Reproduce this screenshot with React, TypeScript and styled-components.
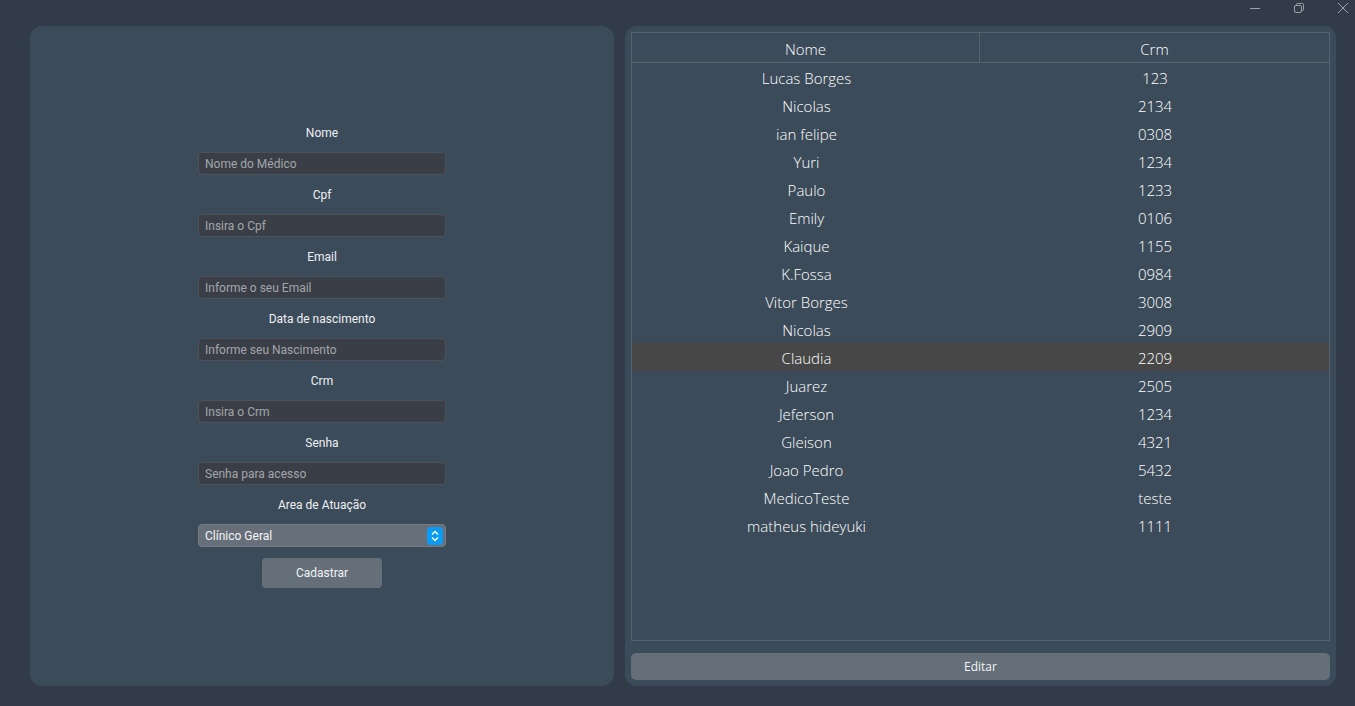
import React from "react";
import styled, { createGlobalStyle } from "styled-components";

const Global = createGlobalStyle`
  html, body { margin: 0; padding: 0; background: #323c48; }
  body { width: 1355px; height: 706px; overflow: hidden; font-family: Roboto, "Noto Sans", sans-serif; }
  * { box-sizing: border-box; }
`;

const Window = styled.div`
  width: 1355px;
  height: 706px;
  background: #323c48;
  position: relative;
  display: grid;
  grid-template-columns: 584px 711px;
  column-gap: 11px;
  padding: 26px 19px 20px 30px;
`;

const Controls = styled.div`
  position: absolute;
  top: 0;
  right: -10px;
  display: flex;
  align-items: center;
  height: 15px;
`;

const CtrlBtn = styled.div`
  width: 44px;
  height: 15px;
  display: flex;
  align-items: center;
  justify-content: center;
`;

const Panel = styled.div`
  background: #3c4b5a;
  border-radius: 12px;
`;

const FormPanel = styled(Panel)`
  display: flex;
  flex-direction: column;
  align-items: center;
  justify-content: center;
  gap: 8px;
  padding-bottom: 3px;
`;

const Label = styled.div`
  height: 23px;
  line-height: 23px;
  font-size: 12px;
  font-weight: 400;
  color: #eef0f2;
  text-align: center;
  padding-top: 1px;
`;

const Input = styled.input`
  width: 248px;
  height: 23px;
  background: #3a3f47;
  border: 1px solid #4b525b;
  border-radius: 4px;
  padding: 0 6px;
  font-family: Roboto, sans-serif;
  font-size: 12px;
  color: #e6e6e6;
  outline: none;
  &::placeholder { color: #a2a6ab; }
`;

const Select = styled.div`
  width: 248px;
  height: 23px;
  background: #67707a;
  border: 1px solid #737c86;
  border-radius: 4px;
  padding: 0 2px 0 6px;
  display: flex;
  align-items: center;
  justify-content: space-between;
  font-size: 12px;
  color: #f4f5f6;
`;

const Spinner = styled.div`
  width: 16px;
  height: 18px;
  border-radius: 4px;
  background: #0a9bf5;
  display: flex;
  align-items: center;
  justify-content: center;
`;

const Button = styled.div`
  width: 120px;
  height: 30px;
  margin-top: 3px;
  background: #656f79;
  border-radius: 4px;
  display: flex;
  align-items: center;
  justify-content: center;
  font-size: 12px;
  color: #f2f4f6;
`;

const TablePanel = styled(Panel)`
  display: flex;
  flex-direction: column;
  padding: 6px;
  gap: 12px;
`;

const Table = styled.div`
  flex: 1;
  border: 1px solid #56636f;
  display: flex;
  flex-direction: column;
  font-family: "Open Sans", sans-serif;
  font-weight: 300;
  font-size: 15px;
  color: #ffffff;
`;

const Header = styled.div`
  display: grid;
  grid-template-columns: 348px 1fr;
  height: 30px;
  border-bottom: 1px solid #5a6570;
`;

const HeadCell = styled.div<{ $divider?: boolean }>`
  display: flex;
  align-items: center;
  justify-content: center;
  border-right: ${(p) => (p.$divider ? "1px solid #56636f" : "none")};
  padding-top: 2px;
`;

const Row = styled.div<{ $selected?: boolean }>`
  display: grid;
  grid-template-columns: 349px 1fr;
  height: 28px;
  background: ${(p) => (p.$selected ? "#474747" : "transparent")};
`;

const Cell = styled.div`
  display: flex;
  align-items: center;
  justify-content: center;
  padding-top: 1px;
`;

const EditButton = styled.div`
  height: 27px;
  background: #656f79;
  border-radius: 5px;
  display: flex;
  align-items: center;
  justify-content: center;
  font-family: "Open Sans", sans-serif;
  font-size: 12px;
  color: #f2f4f6;
`;

const fields = [
  ["Nome", "Nome do Médico"],
  ["Cpf", "Insira o Cpf"],
  ["Email", "Informe o seu Email"],
  ["Data de nascimento", "Informe seu Nascimento"],
  ["Crm", "Insira o Crm"],
  ["Senha", "Senha para acesso"],
];

const rows: [string, string][] = [
  ["Lucas Borges", "123"],
  ["Nicolas", "2134"],
  ["ian felipe", "0308"],
  ["Yuri", "1234"],
  ["Paulo", "1233"],
  ["Emily", "0106"],
  ["Kaique", "1155"],
  ["K.Fossa", "0984"],
  ["Vitor Borges", "3008"],
  ["Nicolas", "2909"],
  ["Claudia", "2209"],
  ["Juarez", "2505"],
  ["Jeferson", "1234"],
  ["Gleison", "4321"],
  ["Joao Pedro", "5432"],
  ["MedicoTeste", "teste"],
  ["matheus hideyuki", "1111"],
];

export default function App() {
  return (
    <Window>
      <Global />
      <Controls>
        <CtrlBtn>
          <svg width="12" height="12" viewBox="0 0 12 12">
            <line x1="1" y1="6.5" x2="11" y2="6.5" stroke="#9aa3ac" strokeWidth="1" />
          </svg>
        </CtrlBtn>
        <CtrlBtn>
          <svg width="12" height="12" viewBox="0 0 12 12" fill="none" stroke="#9aa3ac" strokeWidth="1">
            <rect x="1.5" y="3.5" width="7" height="7" rx="1.5" />
            <path d="M3.5 3.5 V2.5 a1 1 0 0 1 1 -1 H9.5 a1 1 0 0 1 1 1 V7.5 a1 1 0 0 1 -1 1 H8.5" />
          </svg>
        </CtrlBtn>
        <CtrlBtn>
          <svg width="12" height="12" viewBox="0 0 12 12">
            <path d="M1 1 L11 11 M11 1 L1 11" stroke="#9aa3ac" strokeWidth="1" />
          </svg>
        </CtrlBtn>
      </Controls>
      <FormPanel>
        {fields.map(([l, p]) => (
          <React.Fragment key={l}>
            <Label>{l}</Label>
            <Input placeholder={p} readOnly />
          </React.Fragment>
        ))}
        <Label>Area de Atuação</Label>
        <Select>
          <span>Clínico Geral</span>
          <Spinner>
            <svg width="10" height="14" viewBox="0 0 10 14" fill="none" stroke="#fff" strokeWidth="1.4">
              <path d="M2 5.5 L5 2.5 L8 5.5" />
              <path d="M2 8.5 L5 11.5 L8 8.5" />
            </svg>
          </Spinner>
        </Select>
        <Button>Cadastrar</Button>
      </FormPanel>
      <TablePanel>
        <Table>
          <Header>
            <HeadCell $divider>Nome</HeadCell>
            <HeadCell>Crm</HeadCell>
          </Header>
          {rows.map(([n, c], i) => (
            <Row key={i} $selected={n === "Claudia"}>
              <Cell>{n}</Cell>
              <Cell>{c}</Cell>
            </Row>
          ))}
        </Table>
        <EditButton>Editar</EditButton>
      </TablePanel>
    </Window>
  );
}
